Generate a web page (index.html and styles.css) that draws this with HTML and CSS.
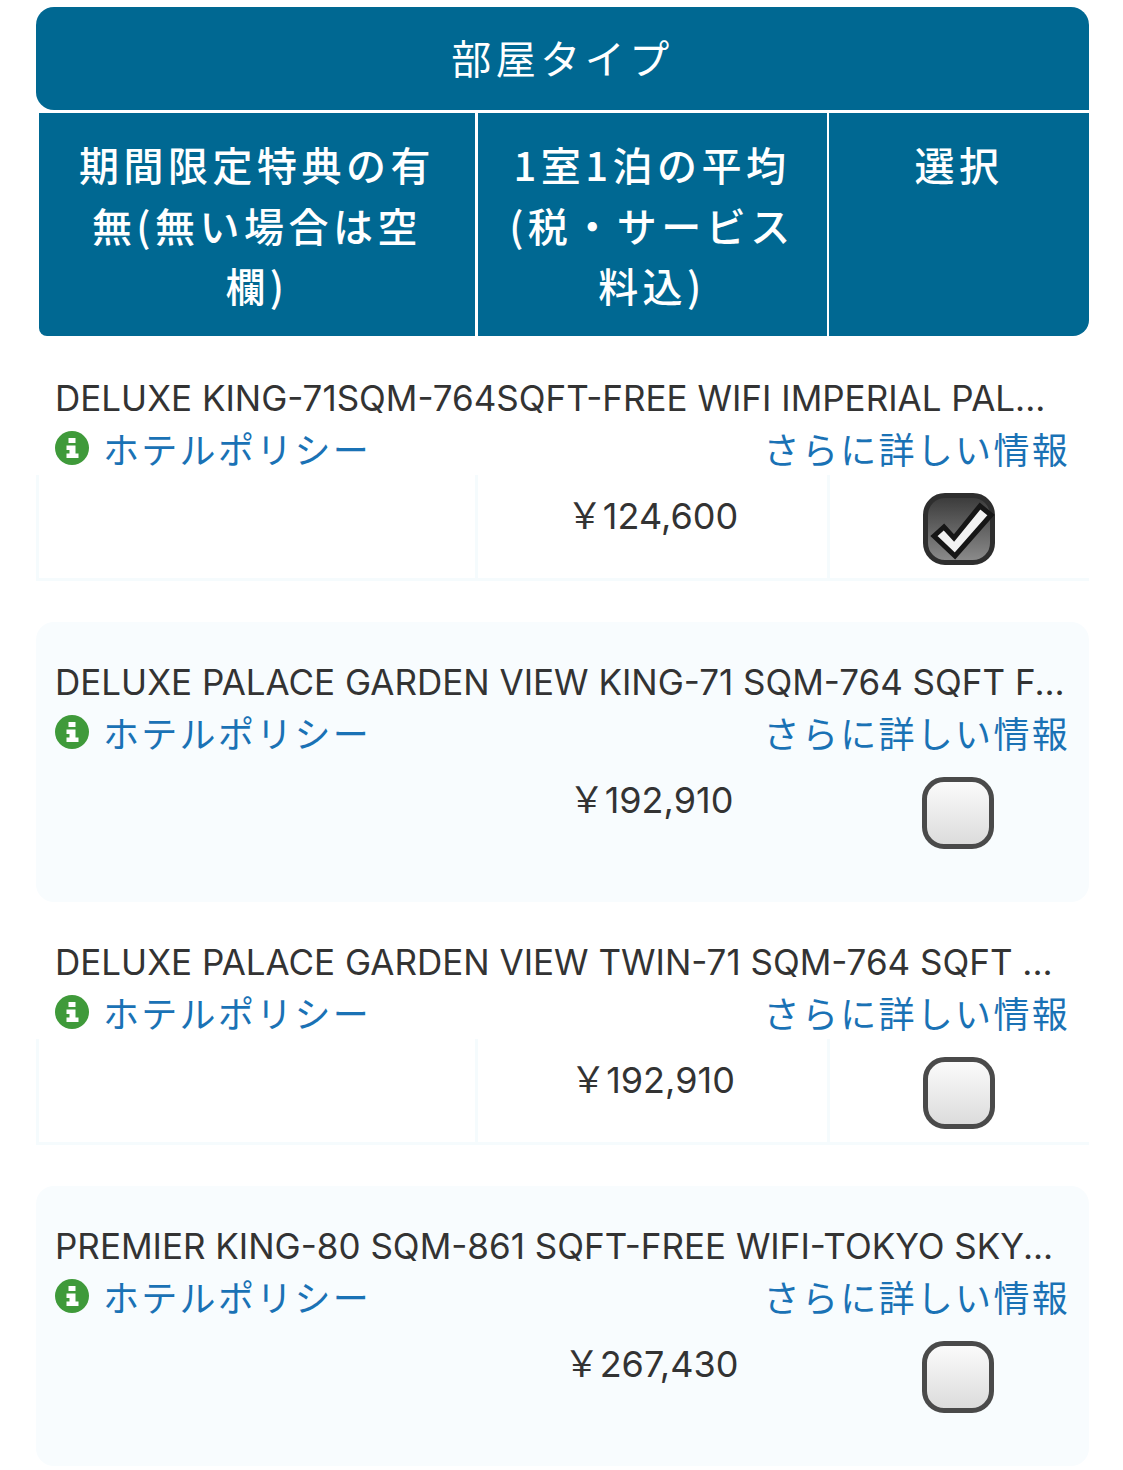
FILE: index.html
```html
<!DOCTYPE html>
<html lang="ja">
<head>
<meta charset="utf-8">
<title>部屋タイプ</title>
<link rel="stylesheet" href="styles.css">
</head>
<body>
<main class="table">
  <div class="head-title">部屋タイプ</div>
  <div class="head-cols">
    <div class="hc hc-a">期間限定特典の有無(無い場合は空欄)</div>
    <div class="hc hc-b">1室1泊の平均(税・サービス料込)</div>
    <div class="hc hc-c">選択</div>
  </div>

  <section class="room odd first">
    <div class="name">DELUXE KING-71SQM-764SQFT-FREE WIFI IMPERIAL PAL...</div>
    <div class="links">
      <a class="policy"><svg class="info" viewBox="0 0 34 34"><circle cx="17" cy="17" r="17" fill="#3f9a3a"/><path fill="#fff" d="M13.5 7h7v5h-7zM11.500 14.500h9v8h3V27h-12v-4.500h3v-3.500h-3z"/></svg>ホテルポリシー</a>
      <a class="more">さらに詳しい情報</a>
    </div>
    <div class="cells">
      <div class="cell c-a"></div>
      <div class="cell c-b">￥124,600</div>
      <div class="cell c-c"><span class="check on"><svg viewBox="0 0 72 72"><path d="M11 43 L21 34 L31 45 L57 13 L68 22 L32 63 Z" fill="#f2f2f2" stroke="#161616" stroke-width="5" stroke-linejoin="miter"/></svg></span></div>
    </div>
  </section>

  <section class="room even">
    <div class="name">DELUXE PALACE GARDEN VIEW KING-71 SQM-764 SQFT F...</div>
    <div class="links">
      <a class="policy"><svg class="info" viewBox="0 0 34 34"><circle cx="17" cy="17" r="17" fill="#3f9a3a"/><path fill="#fff" d="M13.5 7h7v5h-7zM11.500 14.500h9v8h3V27h-12v-4.500h3v-3.500h-3z"/></svg>ホテルポリシー</a>
      <a class="more">さらに詳しい情報</a>
    </div>
    <div class="cells">
      <div class="cell c-a"></div>
      <div class="cell c-b">￥192,910</div>
      <div class="cell c-c"><span class="check"></span></div>
    </div>
  </section>

  <section class="room odd">
    <div class="name">DELUXE PALACE GARDEN VIEW TWIN-71 SQM-764 SQFT ...</div>
    <div class="links">
      <a class="policy"><svg class="info" viewBox="0 0 34 34"><circle cx="17" cy="17" r="17" fill="#3f9a3a"/><path fill="#fff" d="M13.5 7h7v5h-7zM11.500 14.500h9v8h3V27h-12v-4.500h3v-3.500h-3z"/></svg>ホテルポリシー</a>
      <a class="more">さらに詳しい情報</a>
    </div>
    <div class="cells">
      <div class="cell c-a"></div>
      <div class="cell c-b">￥192,910</div>
      <div class="cell c-c"><span class="check"></span></div>
    </div>
  </section>

  <section class="room even">
    <div class="name">PREMIER KING-80 SQM-861 SQFT-FREE WIFI-TOKYO SKY...</div>
    <div class="links">
      <a class="policy"><svg class="info" viewBox="0 0 34 34"><circle cx="17" cy="17" r="17" fill="#3f9a3a"/><path fill="#fff" d="M13.5 7h7v5h-7zM11.500 14.500h9v8h3V27h-12v-4.500h3v-3.500h-3z"/></svg>ホテルポリシー</a>
      <a class="more">さらに詳しい情報</a>
    </div>
    <div class="cells">
      <div class="cell c-a"></div>
      <div class="cell c-b">￥267,430</div>
      <div class="cell c-c"><span class="check"></span></div>
    </div>
  </section>
</main>
</body>
</html>
```
FILE: styles.css
```css
* { box-sizing: border-box; }
html, body { margin: 0; padding: 0; background: #fff; }
body {
  font-family: Inter, "Noto Sans CJK JP", sans-serif;
  color: #333;
  height: 1470px;
  overflow: hidden;
}
.table {
  width: 1053px;
  margin: 7px 0 0 36px;
}
.head-title {
  height: 103px;
  background: #006892;
  color: #fff;
  border-radius: 18px 18px 0 18px;
  border-bottom-right-radius: 0;
  font-family: "Noto Sans CJK JP", sans-serif;
  font-size: 40px;
  letter-spacing: 4.5px;
  line-height: 100px;
  text-align: center;
}
.head-cols {
  display: grid;
  grid-template-columns: 436px 349px 260px;
  column-gap: 3px;
  column-gap: 2.500px;
  margin: 3px 0 0 3px;
  height: 223px;
  border-radius: 0 0 16px 8px;
  overflow: hidden;
}
.hc {
  background: #006892;
  color: #fff;
  font-family: "Noto Sans CJK JP", sans-serif;
  font-size: 40px;
  font-weight: 500;
  letter-spacing: 4.5px;
  line-height: 60.500px;
  text-align: center;
  padding: 21px 30px 0;
}
.room { border-radius: 18px; }
.room.first { margin-top: 2px; }
.room + .room { margin-top: 20px; }
.room.even { background: #f8fcfe; height: 280px; padding-top: 40px; }
.room.odd { height: 264px; padding-top: 40px; }
.room.odd.first { height: 264px; }
.room.odd:not(.first) { margin-top: 2px; height: 262px; padding-top: 38px; }
.name {
  font-size: 35px;
  line-height: 40px;
  padding: 0 19px;
  white-space: nowrap;
  overflow: hidden;
  color: #333;
}
.links {
  display: flex;
  justify-content: space-between;
  padding: 0 19px;
  height: 60px;
  font-family: "Noto Sans CJK JP", sans-serif;
  font-size: 36px;
  letter-spacing: 2.300px;
  color: #1a72b5;
  line-height: 60px;
}
.policy { display: flex; align-items: center; }
.info { width: 34px; height: 34px; margin-right: 14px; }
.cells {
  display: grid;
  grid-template-columns: 439px 352px 262px;
  height: 106px;
  margin-top: -3px;
}
.cell { position: relative; }
.odd .cell { border-bottom: 3px solid #f5fbfd; }
.odd .c-a, .odd .c-b { border-left: 3px solid #f5fbfd; }
.odd .c-b, .odd .c-c { border-left: 3px solid #f5fbfd; }
.c-b {
  font-size: 36px;
  text-align: center;
  line-height: 40px;
  padding-top: 21px;
  padding-right: 0;
}
.c-c { display: flex; justify-content: center; padding-top: 18px; padding-right: 1px; }
.check {
  display: block;
  width: 72px;
  height: 72px;
  border: 5px solid #4a4a4a;
  border-radius: 22px;
  background: linear-gradient(#fbfbfb, #dcdcdc);
}
.check.on {
  background: linear-gradient(#3c3c3c, #8a8a8a);
  border-color: #2e2e2e;
  position: relative;
}
.check svg { position: absolute; left: -5px; top: -5px; width: 72px; height: 72px; }
```
